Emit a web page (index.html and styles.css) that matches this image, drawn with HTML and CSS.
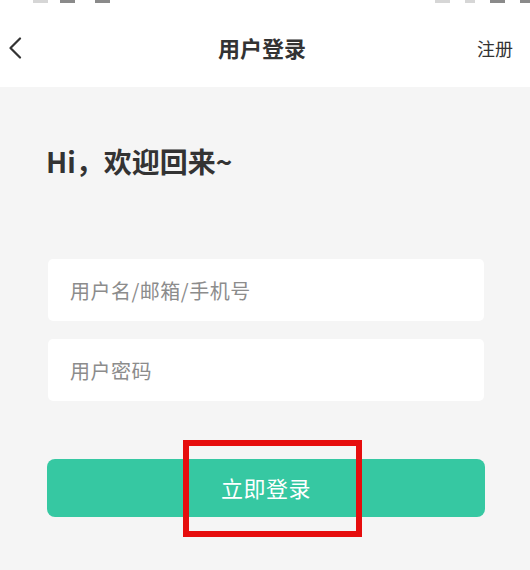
FILE: index.html
```html
<!DOCTYPE html>
<html lang="zh-CN">
<head>
<meta charset="utf-8">
<title>用户登录</title>
<link rel="stylesheet" href="styles.css">
</head>
<body>
<div class="page">
  <div class="status">
    <div class="status-left">
      <span class="sb sb-faint"></span>
      <span class="sb"></span>
      <span class="sb"></span>
    </div>
    <div class="status-right">
      <span class="sb sb-faint"></span>
      <span class="sb sb-faint sb-short"></span>
      <span class="sb"></span>
      <span class="sb sb-short"></span>
    </div>
  </div>
  <header class="header">
    <div class="back">
      <svg width="14" height="22" viewBox="0 0 14 22"><path d="M12 1.5 L2.5 11 L12 20.5" fill="none" stroke="#333" stroke-width="2.2" stroke-linecap="round" stroke-linejoin="round"/></svg>
    </div>
    <div class="title">用户登录</div>
    <div class="register">注册</div>
  </header>
  <main class="main">
    <h1 class="greet">Hi，欢迎回来~</h1>
    <div class="fields">
      <input class="field" type="text" placeholder="用户名/邮箱/手机号">
      <input class="field" type="password" placeholder="用户密码">
    </div>
    <div class="btn-wrap">
      <button class="login">立即登录</button>
      <div class="highlight"></div>
    </div>
  </main>
</div>
</body>
</html>
```
FILE: styles.css
```css
* { box-sizing: border-box; }
html, body {
  margin: 0;
  padding: 0;
  background: #f5f5f5;
  font-family: "Noto Sans CJK SC", "Noto Sans", sans-serif;
  color: #333;
}
.page {
  width: 530px;
  min-height: 570px;
  background: #f5f5f5;
  overflow: hidden;
}
.status {
  height: 4px;
  background: #fff;
  display: flex;
  justify-content: space-between;
  align-items: flex-start;
  padding: 0 0 0 33px;
}
.status-left, .status-right {
  display: flex;
  gap: 12px;
}
.status-left .sb:nth-child(3) { margin-left: 8px; }
.status-right { gap: 15px; }
.sb {
  display: block;
  width: 15px;
  height: 3px;
  background: #8a8a8a;
}
.sb-faint { background: #d6d6d6; }
.sb-short { width: 10px; }
.header {
  height: 83px;
  background: #fff;
  display: grid;
  grid-template-columns: 1fr auto 1fr;
  align-items: center;
  padding: 0 17px 0 8px;
}
.back {
  display: flex;
  align-items: center;
  padding-top: 4px;
}
.title {
  font-size: 22px;
  font-weight: 700;
  color: #333;
  padding-top: 2px;
  margin-left: 3px;
}
.register {
  text-align: right;
  font-size: 18px;
  color: #333;
  padding-top: 4px;
}
.main {
  padding: 0 46px 0 48px;
}
.greet {
  margin: 57px 0 0 -2px;
  font-size: 28px;
  line-height: 34px;
  font-weight: 700;
  color: #333;
}
.fields {
  margin-top: 81px;
  display: flex;
  flex-direction: column;
  gap: 18px;
}
.field {
  display: block;
  width: 436px;
  height: 62px;
  border: none;
  outline: none;
  border-radius: 5px;
  background: #fff;
  padding: 0 0 0 22px;
  font-family: "Noto Sans CJK SC", "Noto Sans", sans-serif;
  font-size: 20px;
  letter-spacing: 0.5px;
  color: #333;
}
.field::placeholder {
  color: #8c8c8c;
}
.btn-wrap {
  position: relative;
  margin-top: 58px;
}
.login {
  display: block;
  width: 438px;
  margin-left: -1px;
  height: 58px;
  border: none;
  border-radius: 8px;
  background: #36c8a2;
  color: #fff;
  font-family: "Noto Sans CJK SC", "Noto Sans", sans-serif;
  font-size: 22px;
  letter-spacing: 0.5px;
  padding: 0 0 2px 0;
}
.highlight {
  position: absolute;
  left: 135px;
  top: -19px;
  width: 179px;
  height: 97px;
  border: 6px solid #e60d0d;
}
```
